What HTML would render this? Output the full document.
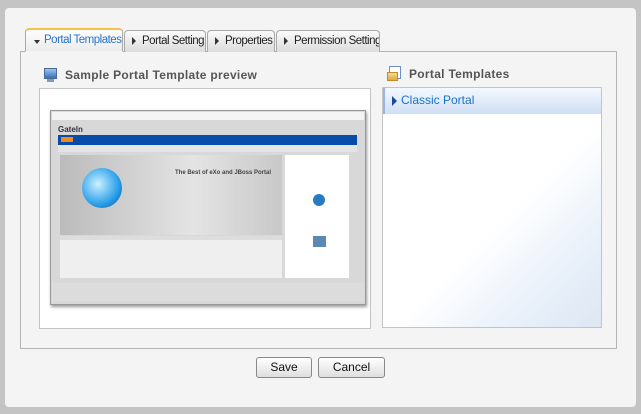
<!DOCTYPE html>
<html><head><style>
*{margin:0;padding:0;box-sizing:border-box}
body{width:641px;height:414px;background:#c4c4c4;font-family:"Liberation Sans",sans-serif;position:relative;overflow:hidden}
.a{position:absolute;white-space:nowrap}
.panel{left:5px;top:8px;width:631px;height:399px;background:#f4f4f4;border-radius:4px}
.tab{top:30px;height:22px;border:1px solid #a8a8a8;border-bottom:none;border-radius:4px 4px 0 0;background:linear-gradient(#fafafa,#dcdcdc);font-size:11.5px;color:#222;line-height:20px;padding-left:17px;letter-spacing:-0.5px;overflow:hidden}
.tab:before{content:"";position:absolute;left:7px;top:6px;border-left:4px solid #333;border-top:4px solid transparent;border-bottom:4px solid transparent}
.sel{top:28px;height:24px;background:linear-gradient(#fdfdfd,#ececec);border-top:2px solid #f5c24a;color:#2a73c9;line-height:21px;z-index:2;border-bottom:1px solid #f3f3f3;padding-left:18px}
.sel:before{left:8px;top:10px;border-top:4px solid #333;border-left:3px solid transparent;border-right:3px solid transparent;border-bottom:none}
.content{left:20px;top:51px;width:597px;height:298px;border:1px solid #b4b4b4;background:#f4f4f4}
.h{font-size:12px;font-weight:bold;color:#555;letter-spacing:.3px}
.btn{top:357px;height:21px;border:1px solid #888;border-radius:3px;background:linear-gradient(#fff,#dedede);font-size:12px;text-align:center;line-height:19px;color:#111}
</style></head><body>
<div class="a panel"></div>
<div class="a content"></div>
<div class="a tab sel" style="left:25px;width:98px">Portal Templates</div>
<div class="a tab" style="left:124px;width:82px">Portal Setting</div>
<div class="a tab" style="left:207px;width:68px">Properties</div>
<div class="a tab" style="left:276px;width:104px">Permission Setting</div>

<div class="a" style="left:44px;top:68px;width:13px;height:11px;background:linear-gradient(#9cc4ee,#3a6fb8);border:1px solid #4a6a9a"></div>
<div class="a" style="left:47px;top:79px;width:7px;height:3px;background:#8a98aa"></div>
<div class="a h" style="left:65px;top:68px">Sample Portal Template preview</div>
<div class="a" style="left:389px;top:66px;width:12px;height:13px;background:#fff;border:1px solid #6d8fc4"></div>
<div class="a" style="left:387px;top:72px;width:11px;height:9px;background:linear-gradient(#f6d98a,#e2a840);border:1px solid #c08a30"></div>
<div class="a h" style="left:409px;top:67px">Portal Templates</div>

<div class="a" style="left:39px;top:88px;width:332px;height:241px;background:#fff;border:1px solid #c4c4c4"></div>
<div class="a" style="left:50px;top:110px;width:316px;height:195px;background:#d8d8d8;border:1px solid #999;box-shadow:1px 2px 3px #999"></div>
<div class="a" style="left:52px;top:112px;width:312px;height:8px;background:#f4f4f4"></div>
<div class="a" style="left:58px;top:125px;font-size:8px;font-weight:bold;color:#334">Gateln</div>
<div class="a" style="left:58px;top:135px;width:299px;height:10px;background:#0a4aa8"></div>
<div class="a" style="left:61px;top:137px;width:12px;height:5px;background:#f08a20"></div>
<div class="a" style="left:58px;top:145px;width:299px;height:7px;background:#e4e4e4"></div>
<div class="a" style="left:60px;top:155px;width:222px;height:80px;background:linear-gradient(90deg,#bbb,#e4e4e4 60%,#c8c8c8)"></div>
<div class="a" style="left:82px;top:168px;width:40px;height:40px;border-radius:50%;background:radial-gradient(circle at 40% 40%,#cdf0ff,#2aa0ea 60%,#0a4a9a)"></div>
<div class="a" style="left:175px;top:170px;font-size:6px;font-weight:bold;color:#444">The Best of eXo and JBoss Portal</div>
<div class="a" style="left:60px;top:236px;width:222px;height:42px;background:#efefef;border-top:4px solid #ddd"></div>
<div class="a" style="left:285px;top:155px;width:64px;height:123px;background:#fff"></div>
<div class="a" style="left:313px;top:194px;width:12px;height:12px;border-radius:50%;background:#2a7ac0"></div>
<div class="a" style="left:313px;top:236px;width:13px;height:11px;background:#5a8ab4"></div>
<div class="a" style="left:52px;top:283px;width:312px;height:18px;background:#dcdcdc"></div>

<div class="a" style="left:382px;top:87px;width:220px;height:241px;background:linear-gradient(135deg,#fff 55%,#e8f0fa 80%,#dde6f2);border:1px solid #c4c4c4"></div>
<div class="a" style="left:383px;top:88px;width:218px;height:26px;background:linear-gradient(#f4f8fe,#cfdff5);border-left:2px solid #98b4e0"></div>
<div class="a" style="left:392px;top:96px;border-left:5px solid #1a4a9a;border-top:5px solid transparent;border-bottom:5px solid transparent"></div>
<div class="a" style="left:401px;top:93px;font-size:12px;color:#1a72c8">Classic Portal</div>

<div class="a btn" style="left:256px;width:56px">Save</div>
<div class="a btn" style="left:318px;width:67px">Cancel</div>
</body></html>
